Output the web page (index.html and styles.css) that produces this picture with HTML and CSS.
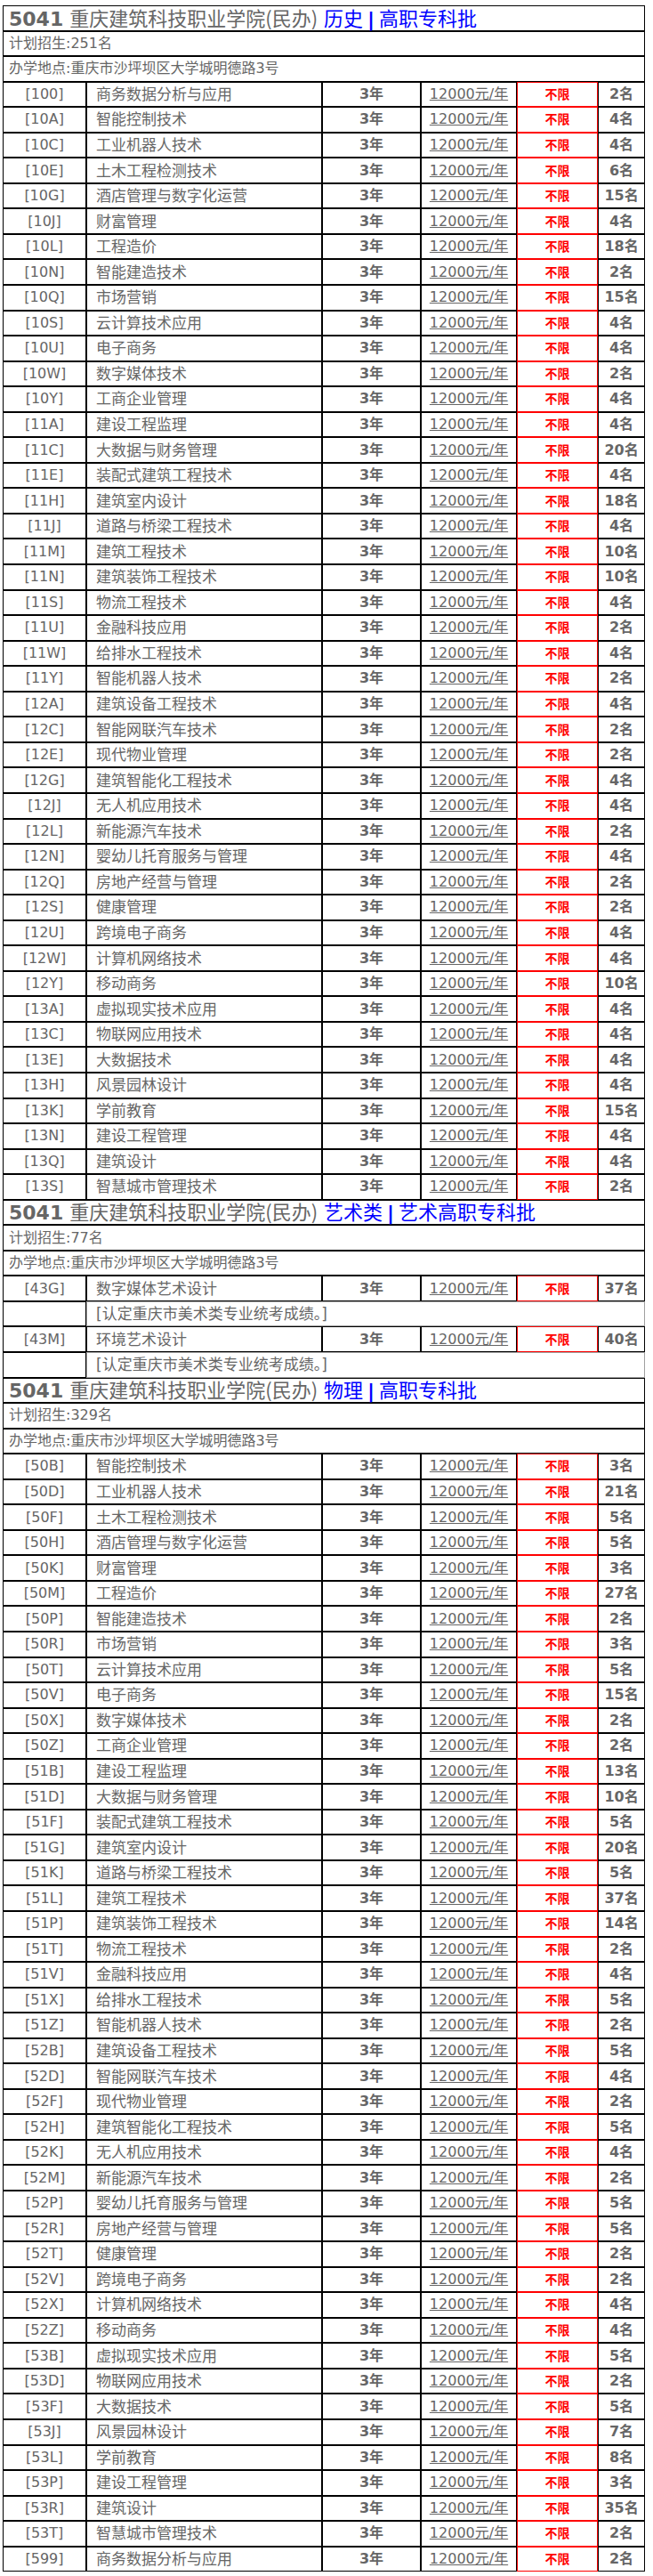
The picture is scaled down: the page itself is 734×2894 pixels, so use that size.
FILE: index.html
```html
<!DOCTYPE html>
<html lang="zh-CN">
<head>
<meta charset="utf-8">
<title>5041 重庆建筑科技职业学院(民办)</title>
<link rel="stylesheet" href="styles.css">
</head>
<body>
<table class="plan">
<colgroup><col class="c1"><col class="c2"><col class="c3"><col class="c4"><col class="c5"><col class="c6"></colgroup>
<tr><td colspan="6" class="head"><b class="sid">5041</b> <span class="school">重庆建筑科技职业学院(民办)</span> <span class="batch">历史 <b>|</b> 高职专科批</span></td></tr>
<tr><td colspan="6" class="info">计划招生:251名</td></tr>
<tr><td colspan="6" class="info">办学地点:重庆市沙坪坝区大学城明德路3号</td></tr>
<tr><td class="code">[100]</td><td class="name">商务数据分析与应用</td><td class="yr">3年</td><td class="fee"><span>12000元/年</span></td><td class="lim">不限</td><td class="num">2名</td></tr>
<tr><td class="code">[10A]</td><td class="name">智能控制技术</td><td class="yr">3年</td><td class="fee"><span>12000元/年</span></td><td class="lim">不限</td><td class="num">4名</td></tr>
<tr><td class="code">[10C]</td><td class="name">工业机器人技术</td><td class="yr">3年</td><td class="fee"><span>12000元/年</span></td><td class="lim">不限</td><td class="num">4名</td></tr>
<tr><td class="code">[10E]</td><td class="name">土木工程检测技术</td><td class="yr">3年</td><td class="fee"><span>12000元/年</span></td><td class="lim">不限</td><td class="num">6名</td></tr>
<tr><td class="code">[10G]</td><td class="name">酒店管理与数字化运营</td><td class="yr">3年</td><td class="fee"><span>12000元/年</span></td><td class="lim">不限</td><td class="num">15名</td></tr>
<tr><td class="code">[10J]</td><td class="name">财富管理</td><td class="yr">3年</td><td class="fee"><span>12000元/年</span></td><td class="lim">不限</td><td class="num">4名</td></tr>
<tr><td class="code">[10L]</td><td class="name">工程造价</td><td class="yr">3年</td><td class="fee"><span>12000元/年</span></td><td class="lim">不限</td><td class="num">18名</td></tr>
<tr><td class="code">[10N]</td><td class="name">智能建造技术</td><td class="yr">3年</td><td class="fee"><span>12000元/年</span></td><td class="lim">不限</td><td class="num">2名</td></tr>
<tr><td class="code">[10Q]</td><td class="name">市场营销</td><td class="yr">3年</td><td class="fee"><span>12000元/年</span></td><td class="lim">不限</td><td class="num">15名</td></tr>
<tr><td class="code">[10S]</td><td class="name">云计算技术应用</td><td class="yr">3年</td><td class="fee"><span>12000元/年</span></td><td class="lim">不限</td><td class="num">4名</td></tr>
<tr><td class="code">[10U]</td><td class="name">电子商务</td><td class="yr">3年</td><td class="fee"><span>12000元/年</span></td><td class="lim">不限</td><td class="num">4名</td></tr>
<tr><td class="code">[10W]</td><td class="name">数字媒体技术</td><td class="yr">3年</td><td class="fee"><span>12000元/年</span></td><td class="lim">不限</td><td class="num">2名</td></tr>
<tr><td class="code">[10Y]</td><td class="name">工商企业管理</td><td class="yr">3年</td><td class="fee"><span>12000元/年</span></td><td class="lim">不限</td><td class="num">4名</td></tr>
<tr><td class="code">[11A]</td><td class="name">建设工程监理</td><td class="yr">3年</td><td class="fee"><span>12000元/年</span></td><td class="lim">不限</td><td class="num">4名</td></tr>
<tr><td class="code">[11C]</td><td class="name">大数据与财务管理</td><td class="yr">3年</td><td class="fee"><span>12000元/年</span></td><td class="lim">不限</td><td class="num">20名</td></tr>
<tr><td class="code">[11E]</td><td class="name">装配式建筑工程技术</td><td class="yr">3年</td><td class="fee"><span>12000元/年</span></td><td class="lim">不限</td><td class="num">4名</td></tr>
<tr><td class="code">[11H]</td><td class="name">建筑室内设计</td><td class="yr">3年</td><td class="fee"><span>12000元/年</span></td><td class="lim">不限</td><td class="num">18名</td></tr>
<tr><td class="code">[11J]</td><td class="name">道路与桥梁工程技术</td><td class="yr">3年</td><td class="fee"><span>12000元/年</span></td><td class="lim">不限</td><td class="num">4名</td></tr>
<tr><td class="code">[11M]</td><td class="name">建筑工程技术</td><td class="yr">3年</td><td class="fee"><span>12000元/年</span></td><td class="lim">不限</td><td class="num">10名</td></tr>
<tr><td class="code">[11N]</td><td class="name">建筑装饰工程技术</td><td class="yr">3年</td><td class="fee"><span>12000元/年</span></td><td class="lim">不限</td><td class="num">10名</td></tr>
<tr><td class="code">[11S]</td><td class="name">物流工程技术</td><td class="yr">3年</td><td class="fee"><span>12000元/年</span></td><td class="lim">不限</td><td class="num">4名</td></tr>
<tr><td class="code">[11U]</td><td class="name">金融科技应用</td><td class="yr">3年</td><td class="fee"><span>12000元/年</span></td><td class="lim">不限</td><td class="num">2名</td></tr>
<tr><td class="code">[11W]</td><td class="name">给排水工程技术</td><td class="yr">3年</td><td class="fee"><span>12000元/年</span></td><td class="lim">不限</td><td class="num">4名</td></tr>
<tr><td class="code">[11Y]</td><td class="name">智能机器人技术</td><td class="yr">3年</td><td class="fee"><span>12000元/年</span></td><td class="lim">不限</td><td class="num">2名</td></tr>
<tr><td class="code">[12A]</td><td class="name">建筑设备工程技术</td><td class="yr">3年</td><td class="fee"><span>12000元/年</span></td><td class="lim">不限</td><td class="num">4名</td></tr>
<tr><td class="code">[12C]</td><td class="name">智能网联汽车技术</td><td class="yr">3年</td><td class="fee"><span>12000元/年</span></td><td class="lim">不限</td><td class="num">2名</td></tr>
<tr><td class="code">[12E]</td><td class="name">现代物业管理</td><td class="yr">3年</td><td class="fee"><span>12000元/年</span></td><td class="lim">不限</td><td class="num">2名</td></tr>
<tr><td class="code">[12G]</td><td class="name">建筑智能化工程技术</td><td class="yr">3年</td><td class="fee"><span>12000元/年</span></td><td class="lim">不限</td><td class="num">4名</td></tr>
<tr><td class="code">[12J]</td><td class="name">无人机应用技术</td><td class="yr">3年</td><td class="fee"><span>12000元/年</span></td><td class="lim">不限</td><td class="num">4名</td></tr>
<tr><td class="code">[12L]</td><td class="name">新能源汽车技术</td><td class="yr">3年</td><td class="fee"><span>12000元/年</span></td><td class="lim">不限</td><td class="num">2名</td></tr>
<tr><td class="code">[12N]</td><td class="name">婴幼儿托育服务与管理</td><td class="yr">3年</td><td class="fee"><span>12000元/年</span></td><td class="lim">不限</td><td class="num">4名</td></tr>
<tr><td class="code">[12Q]</td><td class="name">房地产经营与管理</td><td class="yr">3年</td><td class="fee"><span>12000元/年</span></td><td class="lim">不限</td><td class="num">2名</td></tr>
<tr><td class="code">[12S]</td><td class="name">健康管理</td><td class="yr">3年</td><td class="fee"><span>12000元/年</span></td><td class="lim">不限</td><td class="num">2名</td></tr>
<tr><td class="code">[12U]</td><td class="name">跨境电子商务</td><td class="yr">3年</td><td class="fee"><span>12000元/年</span></td><td class="lim">不限</td><td class="num">4名</td></tr>
<tr><td class="code">[12W]</td><td class="name">计算机网络技术</td><td class="yr">3年</td><td class="fee"><span>12000元/年</span></td><td class="lim">不限</td><td class="num">4名</td></tr>
<tr><td class="code">[12Y]</td><td class="name">移动商务</td><td class="yr">3年</td><td class="fee"><span>12000元/年</span></td><td class="lim">不限</td><td class="num">10名</td></tr>
<tr><td class="code">[13A]</td><td class="name">虚拟现实技术应用</td><td class="yr">3年</td><td class="fee"><span>12000元/年</span></td><td class="lim">不限</td><td class="num">4名</td></tr>
<tr><td class="code">[13C]</td><td class="name">物联网应用技术</td><td class="yr">3年</td><td class="fee"><span>12000元/年</span></td><td class="lim">不限</td><td class="num">4名</td></tr>
<tr><td class="code">[13E]</td><td class="name">大数据技术</td><td class="yr">3年</td><td class="fee"><span>12000元/年</span></td><td class="lim">不限</td><td class="num">4名</td></tr>
<tr><td class="code">[13H]</td><td class="name">风景园林设计</td><td class="yr">3年</td><td class="fee"><span>12000元/年</span></td><td class="lim">不限</td><td class="num">4名</td></tr>
<tr><td class="code">[13K]</td><td class="name">学前教育</td><td class="yr">3年</td><td class="fee"><span>12000元/年</span></td><td class="lim">不限</td><td class="num">15名</td></tr>
<tr><td class="code">[13N]</td><td class="name">建设工程管理</td><td class="yr">3年</td><td class="fee"><span>12000元/年</span></td><td class="lim">不限</td><td class="num">4名</td></tr>
<tr><td class="code">[13Q]</td><td class="name">建筑设计</td><td class="yr">3年</td><td class="fee"><span>12000元/年</span></td><td class="lim">不限</td><td class="num">4名</td></tr>
<tr><td class="code">[13S]</td><td class="name">智慧城市管理技术</td><td class="yr">3年</td><td class="fee"><span>12000元/年</span></td><td class="lim">不限</td><td class="num">2名</td></tr>
</table>
<table class="plan">
<colgroup><col class="c1"><col class="c2"><col class="c3"><col class="c4"><col class="c5"><col class="c6"></colgroup>
<tr><td colspan="6" class="head"><b class="sid">5041</b> <span class="school">重庆建筑科技职业学院(民办)</span> <span class="batch">艺术类 <b>|</b> 艺术高职专科批</span></td></tr>
<tr><td colspan="6" class="info">计划招生:77名</td></tr>
<tr><td colspan="6" class="info">办学地点:重庆市沙坪坝区大学城明德路3号</td></tr>
<tr><td class="code">[43G]</td><td class="name">数字媒体艺术设计</td><td class="yr">3年</td><td class="fee"><span>12000元/年</span></td><td class="lim">不限</td><td class="num">37名</td></tr>
<tr><td></td><td colspan="5" class="note">[认定重庆市美术类专业统考成绩。]</td></tr>
<tr><td class="code">[43M]</td><td class="name">环境艺术设计</td><td class="yr">3年</td><td class="fee"><span>12000元/年</span></td><td class="lim">不限</td><td class="num">40名</td></tr>
<tr><td></td><td colspan="5" class="note">[认定重庆市美术类专业统考成绩。]</td></tr>
</table>
<table class="plan">
<colgroup><col class="c1"><col class="c2"><col class="c3"><col class="c4"><col class="c5"><col class="c6"></colgroup>
<tr><td colspan="6" class="head"><b class="sid">5041</b> <span class="school">重庆建筑科技职业学院(民办)</span> <span class="batch">物理 <b>|</b> 高职专科批</span></td></tr>
<tr><td colspan="6" class="info">计划招生:329名</td></tr>
<tr><td colspan="6" class="info">办学地点:重庆市沙坪坝区大学城明德路3号</td></tr>
<tr><td class="code">[50B]</td><td class="name">智能控制技术</td><td class="yr">3年</td><td class="fee"><span>12000元/年</span></td><td class="lim">不限</td><td class="num">3名</td></tr>
<tr><td class="code">[50D]</td><td class="name">工业机器人技术</td><td class="yr">3年</td><td class="fee"><span>12000元/年</span></td><td class="lim">不限</td><td class="num">21名</td></tr>
<tr><td class="code">[50F]</td><td class="name">土木工程检测技术</td><td class="yr">3年</td><td class="fee"><span>12000元/年</span></td><td class="lim">不限</td><td class="num">5名</td></tr>
<tr><td class="code">[50H]</td><td class="name">酒店管理与数字化运营</td><td class="yr">3年</td><td class="fee"><span>12000元/年</span></td><td class="lim">不限</td><td class="num">5名</td></tr>
<tr><td class="code">[50K]</td><td class="name">财富管理</td><td class="yr">3年</td><td class="fee"><span>12000元/年</span></td><td class="lim">不限</td><td class="num">3名</td></tr>
<tr><td class="code">[50M]</td><td class="name">工程造价</td><td class="yr">3年</td><td class="fee"><span>12000元/年</span></td><td class="lim">不限</td><td class="num">27名</td></tr>
<tr><td class="code">[50P]</td><td class="name">智能建造技术</td><td class="yr">3年</td><td class="fee"><span>12000元/年</span></td><td class="lim">不限</td><td class="num">2名</td></tr>
<tr><td class="code">[50R]</td><td class="name">市场营销</td><td class="yr">3年</td><td class="fee"><span>12000元/年</span></td><td class="lim">不限</td><td class="num">3名</td></tr>
<tr><td class="code">[50T]</td><td class="name">云计算技术应用</td><td class="yr">3年</td><td class="fee"><span>12000元/年</span></td><td class="lim">不限</td><td class="num">5名</td></tr>
<tr><td class="code">[50V]</td><td class="name">电子商务</td><td class="yr">3年</td><td class="fee"><span>12000元/年</span></td><td class="lim">不限</td><td class="num">15名</td></tr>
<tr><td class="code">[50X]</td><td class="name">数字媒体技术</td><td class="yr">3年</td><td class="fee"><span>12000元/年</span></td><td class="lim">不限</td><td class="num">2名</td></tr>
<tr><td class="code">[50Z]</td><td class="name">工商企业管理</td><td class="yr">3年</td><td class="fee"><span>12000元/年</span></td><td class="lim">不限</td><td class="num">2名</td></tr>
<tr><td class="code">[51B]</td><td class="name">建设工程监理</td><td class="yr">3年</td><td class="fee"><span>12000元/年</span></td><td class="lim">不限</td><td class="num">13名</td></tr>
<tr><td class="code">[51D]</td><td class="name">大数据与财务管理</td><td class="yr">3年</td><td class="fee"><span>12000元/年</span></td><td class="lim">不限</td><td class="num">10名</td></tr>
<tr><td class="code">[51F]</td><td class="name">装配式建筑工程技术</td><td class="yr">3年</td><td class="fee"><span>12000元/年</span></td><td class="lim">不限</td><td class="num">5名</td></tr>
<tr><td class="code">[51G]</td><td class="name">建筑室内设计</td><td class="yr">3年</td><td class="fee"><span>12000元/年</span></td><td class="lim">不限</td><td class="num">20名</td></tr>
<tr><td class="code">[51K]</td><td class="name">道路与桥梁工程技术</td><td class="yr">3年</td><td class="fee"><span>12000元/年</span></td><td class="lim">不限</td><td class="num">5名</td></tr>
<tr><td class="code">[51L]</td><td class="name">建筑工程技术</td><td class="yr">3年</td><td class="fee"><span>12000元/年</span></td><td class="lim">不限</td><td class="num">37名</td></tr>
<tr><td class="code">[51P]</td><td class="name">建筑装饰工程技术</td><td class="yr">3年</td><td class="fee"><span>12000元/年</span></td><td class="lim">不限</td><td class="num">14名</td></tr>
<tr><td class="code">[51T]</td><td class="name">物流工程技术</td><td class="yr">3年</td><td class="fee"><span>12000元/年</span></td><td class="lim">不限</td><td class="num">2名</td></tr>
<tr><td class="code">[51V]</td><td class="name">金融科技应用</td><td class="yr">3年</td><td class="fee"><span>12000元/年</span></td><td class="lim">不限</td><td class="num">4名</td></tr>
<tr><td class="code">[51X]</td><td class="name">给排水工程技术</td><td class="yr">3年</td><td class="fee"><span>12000元/年</span></td><td class="lim">不限</td><td class="num">5名</td></tr>
<tr><td class="code">[51Z]</td><td class="name">智能机器人技术</td><td class="yr">3年</td><td class="fee"><span>12000元/年</span></td><td class="lim">不限</td><td class="num">2名</td></tr>
<tr><td class="code">[52B]</td><td class="name">建筑设备工程技术</td><td class="yr">3年</td><td class="fee"><span>12000元/年</span></td><td class="lim">不限</td><td class="num">5名</td></tr>
<tr><td class="code">[52D]</td><td class="name">智能网联汽车技术</td><td class="yr">3年</td><td class="fee"><span>12000元/年</span></td><td class="lim">不限</td><td class="num">4名</td></tr>
<tr><td class="code">[52F]</td><td class="name">现代物业管理</td><td class="yr">3年</td><td class="fee"><span>12000元/年</span></td><td class="lim">不限</td><td class="num">2名</td></tr>
<tr><td class="code">[52H]</td><td class="name">建筑智能化工程技术</td><td class="yr">3年</td><td class="fee"><span>12000元/年</span></td><td class="lim">不限</td><td class="num">5名</td></tr>
<tr><td class="code">[52K]</td><td class="name">无人机应用技术</td><td class="yr">3年</td><td class="fee"><span>12000元/年</span></td><td class="lim">不限</td><td class="num">4名</td></tr>
<tr><td class="code">[52M]</td><td class="name">新能源汽车技术</td><td class="yr">3年</td><td class="fee"><span>12000元/年</span></td><td class="lim">不限</td><td class="num">2名</td></tr>
<tr><td class="code">[52P]</td><td class="name">婴幼儿托育服务与管理</td><td class="yr">3年</td><td class="fee"><span>12000元/年</span></td><td class="lim">不限</td><td class="num">5名</td></tr>
<tr><td class="code">[52R]</td><td class="name">房地产经营与管理</td><td class="yr">3年</td><td class="fee"><span>12000元/年</span></td><td class="lim">不限</td><td class="num">5名</td></tr>
<tr><td class="code">[52T]</td><td class="name">健康管理</td><td class="yr">3年</td><td class="fee"><span>12000元/年</span></td><td class="lim">不限</td><td class="num">2名</td></tr>
<tr><td class="code">[52V]</td><td class="name">跨境电子商务</td><td class="yr">3年</td><td class="fee"><span>12000元/年</span></td><td class="lim">不限</td><td class="num">2名</td></tr>
<tr><td class="code">[52X]</td><td class="name">计算机网络技术</td><td class="yr">3年</td><td class="fee"><span>12000元/年</span></td><td class="lim">不限</td><td class="num">4名</td></tr>
<tr><td class="code">[52Z]</td><td class="name">移动商务</td><td class="yr">3年</td><td class="fee"><span>12000元/年</span></td><td class="lim">不限</td><td class="num">4名</td></tr>
<tr><td class="code">[53B]</td><td class="name">虚拟现实技术应用</td><td class="yr">3年</td><td class="fee"><span>12000元/年</span></td><td class="lim">不限</td><td class="num">5名</td></tr>
<tr><td class="code">[53D]</td><td class="name">物联网应用技术</td><td class="yr">3年</td><td class="fee"><span>12000元/年</span></td><td class="lim">不限</td><td class="num">2名</td></tr>
<tr><td class="code">[53F]</td><td class="name">大数据技术</td><td class="yr">3年</td><td class="fee"><span>12000元/年</span></td><td class="lim">不限</td><td class="num">5名</td></tr>
<tr><td class="code">[53J]</td><td class="name">风景园林设计</td><td class="yr">3年</td><td class="fee"><span>12000元/年</span></td><td class="lim">不限</td><td class="num">7名</td></tr>
<tr><td class="code">[53L]</td><td class="name">学前教育</td><td class="yr">3年</td><td class="fee"><span>12000元/年</span></td><td class="lim">不限</td><td class="num">8名</td></tr>
<tr><td class="code">[53P]</td><td class="name">建设工程管理</td><td class="yr">3年</td><td class="fee"><span>12000元/年</span></td><td class="lim">不限</td><td class="num">3名</td></tr>
<tr><td class="code">[53R]</td><td class="name">建筑设计</td><td class="yr">3年</td><td class="fee"><span>12000元/年</span></td><td class="lim">不限</td><td class="num">35名</td></tr>
<tr><td class="code">[53T]</td><td class="name">智慧城市管理技术</td><td class="yr">3年</td><td class="fee"><span>12000元/年</span></td><td class="lim">不限</td><td class="num">2名</td></tr>
<tr><td class="code">[599]</td><td class="name">商务数据分析与应用</td><td class="yr">3年</td><td class="fee"><span>12000元/年</span></td><td class="lim">不限</td><td class="num">2名</td></tr>
</table>
</body>
</html>
```

FILE: styles.css
```css
html, body {
  background: #ffffff;
}

body {
  margin: 0;
  padding: 6px 0 0 3px;
  font-family: "DejaVu Sans", "Noto Sans CJK SC", sans-serif;
  font-size: 16px;
  color: #666666;
}

.plan {
  width: 722px;
  table-layout: fixed;
  border-collapse: separate;
  border-spacing: 0;
}

.plan .c1 { width: 94px; }
.plan .c2 { width: 265px; }
.plan .c3 { width: 111px; }
.plan .c4 { width: 108px; }
.plan .c5 { width: 91px; }
.plan .c6 { width: 53px; }

.plan tr {
  height: 28.55px;
}

.plan td {
  border: 1px solid #000000;
  padding: 0;
  line-height: 18px;
  vertical-align: middle;
  white-space: nowrap;
}

.plan td.head {
  font-size: 22px;
  line-height: 22px;
  padding-left: 6px;
}

.head .sid {
  font-weight: bold;
  color: #666666;
}

.head .school {
  font-family: "Noto Sans CJK SC", "DejaVu Sans", sans-serif;
  color: #666666;
}

.head .batch {
  font-family: "Noto Sans CJK SC", "DejaVu Sans", sans-serif;
  color: #0000ff;
}

.head .batch b {
  font-family: "DejaVu Sans", sans-serif;
  font-weight: bold;
}

.plan td.info {
  padding-left: 6px;
  font-size: 16px;
}

.code {
  text-align: center;
}

.plan td.name {
  padding-left: 10px;
  font-size: 17px;
}

.yr {
  text-align: center;
  font-weight: bold;
}

.fee {
  text-align: center;
}

.fee span {
  text-decoration: underline;
}

.plan td.lim {
  border-color: #ff0000;
  text-align: center;
  color: #ff0000;
  font-weight: bold;
  font-size: 14px;
}

.num {
  text-align: center;
  font-weight: bold;
}

.plan td.note {
  border-color: #a0a0a0;
  padding-left: 10px;
  font-size: 17px;
}
```
